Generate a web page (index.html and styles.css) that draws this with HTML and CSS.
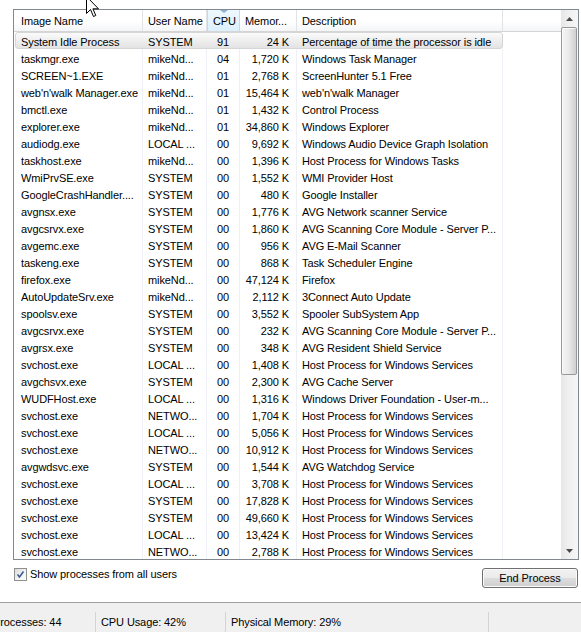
FILE: index.html
```html
<!DOCTYPE html>
<html>
<head>
<meta charset="utf-8">
<link rel="stylesheet" href="styles.css">
</head>
<body>
<div class="main">
  <div class="listview">
    <div class="table">
      <div class="header">
        <div class="hc first">Image Name</div>
        <div class="hc">User Name</div>
        <div class="hc sorted">CPU</div>
        <div class="hc">Memor...</div>
        <div class="hc">Description</div>
        <div class="hc last"></div>
      </div>
      <div class="rows">
        <div class="row sel"><div class="c first">System Idle Process</div><div class="c">SYSTEM</div><div class="c num">91</div><div class="c mem">24 K</div><div class="c">Percentage of time the processor is idle</div></div>
        <div class="row"><div class="c first">taskmgr.exe</div><div class="c">mikeNd...</div><div class="c num">04</div><div class="c mem">1,720 K</div><div class="c">Windows Task Manager</div><div class="c fill"></div></div>
        <div class="row"><div class="c first">SCREEN~1.EXE</div><div class="c">mikeNd...</div><div class="c num">01</div><div class="c mem">2,768 K</div><div class="c">ScreenHunter 5.1 Free</div><div class="c fill"></div></div>
        <div class="row"><div class="c first">web'n'walk Manager.exe</div><div class="c">mikeNd...</div><div class="c num">01</div><div class="c mem">15,464 K</div><div class="c">web'n'walk Manager</div><div class="c fill"></div></div>
        <div class="row"><div class="c first">bmctl.exe</div><div class="c">mikeNd...</div><div class="c num">01</div><div class="c mem">1,432 K</div><div class="c">Control Process</div><div class="c fill"></div></div>
        <div class="row"><div class="c first">explorer.exe</div><div class="c">mikeNd...</div><div class="c num">01</div><div class="c mem">34,860 K</div><div class="c">Windows Explorer</div><div class="c fill"></div></div>
        <div class="row"><div class="c first">audiodg.exe</div><div class="c">LOCAL ...</div><div class="c num">00</div><div class="c mem">9,692 K</div><div class="c">Windows Audio Device Graph Isolation</div><div class="c fill"></div></div>
        <div class="row"><div class="c first">taskhost.exe</div><div class="c">mikeNd...</div><div class="c num">00</div><div class="c mem">1,396 K</div><div class="c">Host Process for Windows Tasks</div><div class="c fill"></div></div>
        <div class="row"><div class="c first">WmiPrvSE.exe</div><div class="c">SYSTEM</div><div class="c num">00</div><div class="c mem">1,552 K</div><div class="c">WMI Provider Host</div><div class="c fill"></div></div>
        <div class="row"><div class="c first">GoogleCrashHandler....</div><div class="c">SYSTEM</div><div class="c num">00</div><div class="c mem">480 K</div><div class="c">Google Installer</div><div class="c fill"></div></div>
        <div class="row"><div class="c first">avgnsx.exe</div><div class="c">SYSTEM</div><div class="c num">00</div><div class="c mem">1,776 K</div><div class="c">AVG Network scanner Service</div><div class="c fill"></div></div>
        <div class="row"><div class="c first">avgcsrvx.exe</div><div class="c">SYSTEM</div><div class="c num">00</div><div class="c mem">1,860 K</div><div class="c">AVG Scanning Core Module - Server P...</div><div class="c fill"></div></div>
        <div class="row"><div class="c first">avgemc.exe</div><div class="c">SYSTEM</div><div class="c num">00</div><div class="c mem">956 K</div><div class="c">AVG E-Mail Scanner</div><div class="c fill"></div></div>
        <div class="row"><div class="c first">taskeng.exe</div><div class="c">SYSTEM</div><div class="c num">00</div><div class="c mem">868 K</div><div class="c">Task Scheduler Engine</div><div class="c fill"></div></div>
        <div class="row"><div class="c first">firefox.exe</div><div class="c">mikeNd...</div><div class="c num">00</div><div class="c mem">47,124 K</div><div class="c">Firefox</div><div class="c fill"></div></div>
        <div class="row"><div class="c first">AutoUpdateSrv.exe</div><div class="c">mikeNd...</div><div class="c num">00</div><div class="c mem">2,112 K</div><div class="c">3Connect Auto Update</div><div class="c fill"></div></div>
        <div class="row"><div class="c first">spoolsv.exe</div><div class="c">SYSTEM</div><div class="c num">00</div><div class="c mem">3,552 K</div><div class="c">Spooler SubSystem App</div><div class="c fill"></div></div>
        <div class="row"><div class="c first">avgcsrvx.exe</div><div class="c">SYSTEM</div><div class="c num">00</div><div class="c mem">232 K</div><div class="c">AVG Scanning Core Module - Server P...</div><div class="c fill"></div></div>
        <div class="row"><div class="c first">avgrsx.exe</div><div class="c">SYSTEM</div><div class="c num">00</div><div class="c mem">348 K</div><div class="c">AVG Resident Shield Service</div><div class="c fill"></div></div>
        <div class="row"><div class="c first">svchost.exe</div><div class="c">LOCAL ...</div><div class="c num">00</div><div class="c mem">1,408 K</div><div class="c">Host Process for Windows Services</div><div class="c fill"></div></div>
        <div class="row"><div class="c first">avgchsvx.exe</div><div class="c">SYSTEM</div><div class="c num">00</div><div class="c mem">2,300 K</div><div class="c">AVG Cache Server</div><div class="c fill"></div></div>
        <div class="row"><div class="c first">WUDFHost.exe</div><div class="c">LOCAL ...</div><div class="c num">00</div><div class="c mem">1,316 K</div><div class="c">Windows Driver Foundation - User-m...</div><div class="c fill"></div></div>
        <div class="row"><div class="c first">svchost.exe</div><div class="c">NETWO...</div><div class="c num">00</div><div class="c mem">1,704 K</div><div class="c">Host Process for Windows Services</div><div class="c fill"></div></div>
        <div class="row"><div class="c first">svchost.exe</div><div class="c">LOCAL ...</div><div class="c num">00</div><div class="c mem">5,056 K</div><div class="c">Host Process for Windows Services</div><div class="c fill"></div></div>
        <div class="row"><div class="c first">svchost.exe</div><div class="c">NETWO...</div><div class="c num">00</div><div class="c mem">10,912 K</div><div class="c">Host Process for Windows Services</div><div class="c fill"></div></div>
        <div class="row"><div class="c first">avgwdsvc.exe</div><div class="c">SYSTEM</div><div class="c num">00</div><div class="c mem">1,544 K</div><div class="c">AVG Watchdog Service</div><div class="c fill"></div></div>
        <div class="row"><div class="c first">svchost.exe</div><div class="c">LOCAL ...</div><div class="c num">00</div><div class="c mem">3,708 K</div><div class="c">Host Process for Windows Services</div><div class="c fill"></div></div>
        <div class="row"><div class="c first">svchost.exe</div><div class="c">SYSTEM</div><div class="c num">00</div><div class="c mem">17,828 K</div><div class="c">Host Process for Windows Services</div><div class="c fill"></div></div>
        <div class="row"><div class="c first">svchost.exe</div><div class="c">SYSTEM</div><div class="c num">00</div><div class="c mem">49,660 K</div><div class="c">Host Process for Windows Services</div><div class="c fill"></div></div>
        <div class="row"><div class="c first">svchost.exe</div><div class="c">LOCAL ...</div><div class="c num">00</div><div class="c mem">13,424 K</div><div class="c">Host Process for Windows Services</div><div class="c fill"></div></div>
        <div class="row"><div class="c first">svchost.exe</div><div class="c">NETWO...</div><div class="c num">00</div><div class="c mem">2,788 K</div><div class="c">Host Process for Windows Services</div><div class="c fill"></div></div>
      </div>
    </div>
    <div class="scrollbar">
      <div class="sb-btn"><svg width="7" height="4" viewBox="0 0 7 4"><polygon points="0,4 3.5,0 7,4" fill="#4a4a4a"/></svg></div>
      <div class="sb-thumb"></div>
      <div class="sb-space"></div>
      <div class="sb-btn"><svg width="7" height="4" viewBox="0 0 7 4"><polygon points="0,0 7,0 3.5,4" fill="#4a4a4a"/></svg></div>
    </div>
  </div>
  <div class="controls">
    <label class="check"><span class="cbox"><svg width="9" height="9" viewBox="0 0 9 9"><path d="M1.5 4.5 L3.5 7 L7.5 1.5" fill="none" stroke="#3e5a99" stroke-width="1.6"/></svg></span>Show processes from all users</label>
    <button class="endbtn">End Process</button>
  </div>
</div>
<div class="divider"></div>
<div class="status">
  <div class="sp p1">Processes: 44</div>
  <div class="sp p2">CPU Usage: 42%</div>
  <div class="sp p3">Physical Memory: 29%</div>
  <div class="sp p4"></div>
</div>
<svg class="cursor" width="14" height="22" viewBox="0 0 14 22"><path d="M0.5 0.5 L0.5 17.5 L4.5 13.5 L7.5 20.5 L9.8 19.5 L6.9 12.8 L12.5 12.8 Z" fill="#fff" stroke="#000" stroke-width="1" stroke-linejoin="miter"/></svg>
</body>
</html>
```
FILE: styles.css
```css
* { box-sizing: border-box; }
html, body { margin: 0; padding: 0; }
body {
  width: 581px;
  height: 632px;
  overflow: hidden;
  position: relative;
  background: #fff;
  color: #000;
  font-family: "Liberation Sans", Arial, sans-serif;
  font-size: 11px;
  letter-spacing: -0.1px;
}

.main { padding: 9px 2px 0 13px; }

.listview {
  display: flex;
  height: 551px;
  border: 1px solid #828790;
}
.table { flex: 1; min-width: 0; display: flex; flex-direction: column; }

.header {
  display: grid;
  grid-template-columns: 129px 64px 33px 57px 206px 1fr;
  height: 22px;
  border-bottom: 1px solid #d5d5d5;
  background: linear-gradient(#ffffff, #ffffff 55%, #f4f5f7);
}
.hc {
  padding: 1px 0 0 5px;
  line-height: 20px;
  border-right: 1px solid #e2e3e6;
  white-space: nowrap;
  overflow: hidden;
}
.hc.first { padding-left: 7px; }
.hc.sorted {
  position: relative;
  padding-left: 6px;
  background: linear-gradient(#eef8fe, #dcf0fc);
  border-right-color: #b9ddf3;
  box-shadow: inset 1px 0 #b9ddf3;
}
.hc.sorted::before {
  content: "";
  position: absolute;
  left: 13px;
  top: 0;
  border-left: 4px solid transparent;
  border-right: 4px solid transparent;
  border-top: 3px solid #86b3d6;
}
.hc.last { border-right: 0; }

.rows { flex: 1; }
.row {
  display: grid;
  grid-template-columns: 129px 64px 33px 57px 206px 1fr;
  height: 17px;
}
.c {
  padding: 3px 0 0 5px;
  line-height: 14px;
  border-right: 1px solid #edf0f5;
  white-space: nowrap;
  overflow: hidden;
}
.c.first { padding-left: 7px; }
.c.num { text-align: right; padding-left: 0; padding-right: 10px; }
.c.mem { text-align: right; padding-left: 0; padding-right: 7px; }
.c.fill { border-right: 0; }

.row.sel {
  grid-template-columns: 127px 64px 33px 57px 205px;
  width: 488px;
  margin-left: 1px;
  border: 1px solid #d6d6d6;
  border-radius: 3px;
  background: linear-gradient(#fbfbfb, #ececec 60%, #e3e3e3);
}
.row.sel .c { border-right-color: transparent; padding-top: 2px; }
.row.sel .c.first { padding-left: 5px; }

.scrollbar {
  width: 17px;
  display: flex;
  flex-direction: column;
  background: linear-gradient(90deg, #e6e6e6, #efefef 40%, #f6f6f6);
}
.sb-btn {
  height: 17px;
  display: flex;
  align-items: center;
  justify-content: center;
  flex: none;
}
.sb-thumb {
  height: 348px;
  margin: 0 1px 0 0;
  flex: none;
  border: 1px solid #989898;
  border-radius: 2px;
  background: linear-gradient(90deg, #f4f4f4, #ebebeb 45%, #dcdcdc 75%, #cfcfcf);
  box-shadow: inset 1px 1px 0 #fbfbfb;
}
.sb-space { flex: 1; }

.controls {
  height: 42px;
  display: flex;
  justify-content: space-between;
  align-items: flex-start;
  padding: 8px 1px 0 1px;
}
.check {
  display: flex;
  align-items: center;
  gap: 3px;
  height: 13px;
  line-height: 13px;
}
.cbox {
  width: 13px;
  height: 13px;
  border: 1px solid #8e8f8f;
  background: linear-gradient(135deg, #dcdcdc, #f4f4f4 60%, #ffffff);
  display: flex;
  align-items: center;
  justify-content: center;
}
.endbtn {
  width: 96px;
  height: 20px;
  padding: 0;
  margin: 0;
  font-family: inherit;
  font-size: 11px;
  letter-spacing: -0.1px;
  color: #000;
  border: 1px solid #707070;
  border-radius: 3px;
  background: linear-gradient(#f2f2f2, #ebebeb 48%, #dddddd 52%, #cfcfcf);
  box-shadow: inset 0 0 0 1px #fbfbfb;
}

.divider { height: 1px; background: #a0a0a0; }

.status {
  height: 29px;
  background: #f0f0f0;
  padding-top: 9px;
  margin-left: -12px;
  display: flex;
}
.sp {
  height: 20px;
  line-height: 20px;
  padding-left: 5px;
  border-right: 1px solid #d4d4d4;
  white-space: nowrap;
  flex: none;
}
.p1 { width: 108px; }
.p2 { width: 130px; }
.p3 { width: 263px; }
.p4 { flex: 1; border-right: 0; }

.cursor {
  position: absolute;
  left: 86px;
  top: -4px;
}
```
